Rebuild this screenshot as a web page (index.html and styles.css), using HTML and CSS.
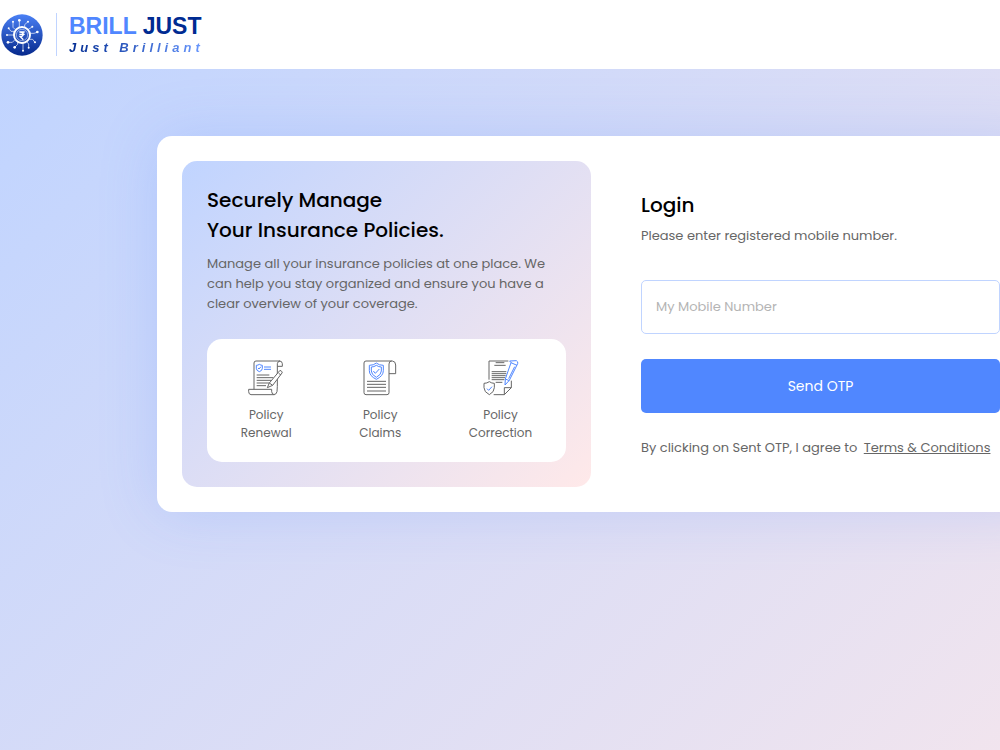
FILE: index.html
```html
<!DOCTYPE html>
<html lang="en">

<head>
    <meta charset="UTF-8">
    <meta name="viewport" content="width=device-width, initial-scale=1.0">
    <title>Brill Just - Login</title>
    <link rel="stylesheet" href="styles.css">
</head>

<body>
    <header class="header">
        <a href="#" class="logo">
            <svg class="logo-mark" viewBox="0 0 126 126" aria-hidden="true">
                <defs>
                    <linearGradient id="markFill" x1="0" y1="0" x2="0" y2="1">
                        <stop offset="0" stop-color="#4a80f5" />
                        <stop offset="1" stop-color="#06298c" />
                    </linearGradient>
                </defs>
                <circle cx="63" cy="63" r="62" fill="url(#markFill)" />
                <g fill="none" stroke="#fff" stroke-width="2">
                    <circle cx="63" cy="63" r="24" stroke-width="6" />
                    <circle cx="63" cy="63" r="17" stroke-width="2" stroke-opacity="0.7" />
                    <path d="M55 54h16M55 61h16M57 54c13 0 13 13 0 13l10 10" stroke-width="4" />
                    <path d="M55 40V20M71 40v-8l9-8M42 46l-6-6V24M40 52H30l-6-8M39 63H20M43 76l-9 9H22M50 83v8l-8 8M66 87v22M76 82l7 8v10M83 76h12l6 8M86 58h13l9-3M81 47l12-8" />
                </g>
                <g fill="#fff">
                    <circle cx="55" cy="19" r="4" />
                    <circle cx="81" cy="23" r="3" />
                    <circle cx="36" cy="23" r="3" />
                    <circle cx="23" cy="43" r="3" />
                    <circle cx="18" cy="63" r="3" />
                    <circle cx="21" cy="85" r="4" />
                    <circle cx="41" cy="100" r="4" />
                    <circle cx="66" cy="110" r="3" />
                    <circle cx="83" cy="101" r="3" />
                    <circle cx="102" cy="85" r="3" />
                    <circle cx="109" cy="54" r="4" />
                    <circle cx="94" cy="38" r="3" />
                </g>
            </svg>
            <span class="logo-text">
                <span class="logo-name">BRILL <b>JUST</b></span>
                <span class="logo-tagline">Just Brilliant</span>
            </span>
        </a>
    </header>

    <main class="main">
        <div class="card">
            <section class="intro">
                <h1>Securely Manage<br>Your Insurance Policies.</h1>
                <p>Manage all your insurance policies at one place. We can help you stay organized and ensure you have a clear overview of your coverage.</p>
                <ul class="services">
                    <li>
                        <svg class="icon" viewBox="0 0 108 108" aria-hidden="true">
                            <path d="M18 88V9q0-6 6-6h72q-7 1-8 8v68l-1 16q-2 9-10 9H9q-7-1-7-9v-7h69v7q1 9 8 9M88 19h15V11q-1-8-8-8" />
                            <path d="M26 45h38M26 53h50M26 61h44M26 69h38M26 77h28" />
                            <path d="M96 31l5 3q3 2 1 5L74 76l-16 7 6-14ZM64 69l10 7M92 40l7 5" fill="#fff" />
                            <path class="accent" d="M34 13q5 3 9 3v9q0 7-9 10-9-3-9-10v-9q5 0 9-3ZM30 24l3 3 6-7M48 21h21M48 28h21" />
                        </svg>
                        <span>Policy<br>Renewal</span>
                    </li>
                    <li>
                        <svg class="icon" viewBox="0 0 108 108" aria-hidden="true">
                            <path d="M6 9q0-6 6-6h79q10 1 10 12v26H81M81 98q0 6-6 6H12q-6 0-6-6V9M81 98V12q0-9 8-9" />
                            <path d="M15 64h57M15 73h57M15 82h57M15 93h57" />
                            <path class="accent" d="M43 9q8 7 21 7v16q0 16-21 26-21-10-21-26V16q13 0 21-7Z" />
                            <path class="accent" d="M43 16q7 5 15 5v12q0 11-15 19-15-8-15-19V21q8 0 15-5ZM34 33l6 7 12-13" />
                        </svg>
                        <span>Policy<br>Claims</span>
                    </li>
                    <li>
                        <svg class="icon" viewBox="0 0 108 108" aria-hidden="true">
                            <path d="M18 59V3h58M32 104h32l21-21V62M64 104V83h21" />
                            <path d="M38 8h26M34 16h34M26 35h44M26 41h44M26 47h42M26 53h40M26 59h38M38 67h20" />
                            <path class="accent" d="M80 3l20-1q6 3 4 9L79 61 66 75 67 57 84 8ZM84 8l18 8M67 57l12 5M95 20L77 56" />
                            <path d="M19 65q7 5 15 5v13q0 13-15 21-16-8-16-21V70q9 0 16-5Z" fill="#fff" />
                            <path class="accent" d="M12 86l5 5 10-11" />
                        </svg>
                        <span>Policy<br>Correction</span>
                    </li>
                </ul>
            </section>

            <form class="login">
                <h2>Login</h2>
                <p><label for="mobile">Please enter registered mobile number.</label></p>
                <input type="tel" id="mobile" placeholder="My Mobile Number">
                <button type="submit">Send OTP</button>
                <p class="terms">By clicking on Sent OTP, I agree to <a href="#">Terms &amp; Conditions</a></p>
            </form>
        </div>
    </main>
</body>

</html>
```
FILE: styles.css
```css
* {
    box-sizing: border-box;
}

body {
    margin: 0;
    min-height: 100vh;
    display: flex;
    flex-direction: column;
    font-family: Poppins, Inter, sans-serif;
    font-size: 13px;
    line-height: 20px;
    color: #666;
    min-width: 1207px;
}

h1,
h2 {
    margin: 0;
    font-size: 20px;
    font-weight: 500;
    line-height: 30px;
    color: #000;
}

p {
    margin: 0;
}

/* Header */
.header {
    background: #fff;
    padding: 13px 1px;
}

.logo {
    display: inline-flex;
    align-items: center;
    gap: 13px;
    text-decoration: none;
    font-family: "Liberation Sans", Arial, sans-serif;
    font-weight: bold;
    vertical-align: top;
}

.logo-mark {
    width: 42px;
    height: 42px;
}

.logo-text {
    display: flex;
    flex-direction: column;
    height: 43px;
    padding-left: 12px;
    border-left: 1px solid #c0d4ff;
}

.logo-name {
    font-size: 23px;
    line-height: 27px;
    color: #5087ff;
}

.logo-name b {
    color: #002b92;
}

.logo-tagline {
    font-size: 13px;
    font-style: italic;
    line-height: 16px;
    letter-spacing: 4px;
    background: linear-gradient(to right, #002b92, #6c9aff);
    -webkit-background-clip: text;
    background-clip: text;
    color: transparent;
}

/* Login card */
.main {
    flex: 1;
    padding: 67px 24px;
    background: linear-gradient(135deg, #c0d4ff, #ffe9e9 115%);
}

.card {
    display: grid;
    grid-template-columns: repeat(2, minmax(0, 1fr));
    gap: 25px;
    max-width: 893px;
    margin: 0 auto;
    padding: 25px;
    background: #fff;
    border-radius: 15px;
    box-shadow: 0 0 60px rgba(80, 135, 255, 0.2);
}

.intro {
    padding: 24px 25px 25px;
    border-radius: 15px;
    background: linear-gradient(135deg, #c0d4ff, #ffe9e9);
}

.intro p {
    margin: 9px 0 25px;
}

.services {
    display: flex;
    justify-content: space-around;
    margin: 0;
    padding: 21px 0 20px;
    list-style: none;
    background: #fff;
    border-radius: 15px;
    font-size: 12px;
    line-height: 18px;
    text-align: center;
}

.icon {
    display: block;
    width: 36px;
    height: 36px;
    margin: 0 auto 10px;
    fill: none;
    stroke: #666;
    stroke-width: 3;
    stroke-linejoin: round;
}

.icon .accent {
    stroke: #5087ff;
}

.login {
    display: flex;
    flex-direction: column;
    justify-content: center;
    padding: 0 25px;
}

.login h2 {
    margin-bottom: 6px;
}

.login input,
.login button {
    width: 100%;
    height: 54px;
    border-radius: 5px;
    font-family: inherit;
}

.login input {
    margin: 34px 0 25px;
    padding: 0 14px;
    border: 1px solid #c0d4ff;
    font-size: 13px;
    color: #000;
}

.login input::placeholder {
    color: #b4b4b4;
}

.login button {
    border: none;
    background: #5087ff;
    color: #fff;
    font-size: 14px;
    cursor: pointer;
}

.terms {
    margin-top: 25px;
}

.terms a {
    margin-left: 3px;
    color: inherit;
}
```
